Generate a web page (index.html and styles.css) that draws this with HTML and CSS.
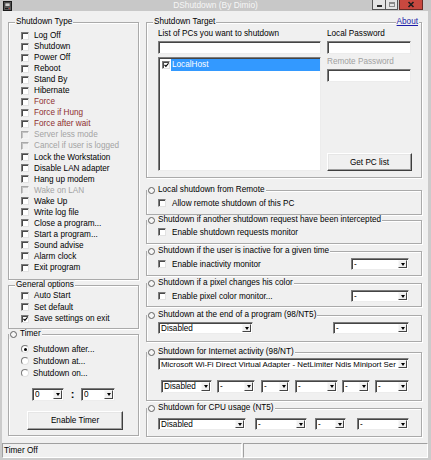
FILE: index.html
```html
<!DOCTYPE html>
<html>
<head>
<meta charset="utf-8">
<title>DShutdown (By Dimio)</title>
<link rel="stylesheet" href="styles.css">
</head>
<body>
<div class="window">
  <div class="titlebar">
    <svg class="app-icon" width="10" height="10" viewBox="0 0 10 10">
      <rect x="0.5" y="0.5" width="8" height="9" fill="#5a5a5a" stroke="#1b1b1b"/>
      <rect x="2" y="2" width="5" height="3.5" fill="#d0d0d0" stroke="#2a2a2a" stroke-width="0.6"/>
      <rect x="2" y="7" width="3" height="1" fill="#1b1b1b"/>
      <rect x="6" y="7" width="1" height="1" fill="#c03030"/>
    </svg>
    <span class="title">DShutdown (By Dimio)</span>
    <div class="caption">
      <span class="cap cap-min"><span class="min-bar"></span></span>
      <span class="cap cap-max"><span class="max-box"></span></span>
      <span class="cap cap-close">
        <svg width="8" height="7" viewBox="0 0 8 7"><path d="M1.5 1 L6.5 6 M6.5 1 L1.5 6" stroke="#1e1e1e" stroke-width="1.6"/></svg>
      </span>
    </div>
  </div>

  <div class="frame-body">
    <div class="client">
      <div class="col col-left">
        <section class="group g-type">
          <div class="legend"><span class="legend-text">Shutdown Type</span></div>
          <div class="type-list">
            <label class="check"><span class="cb"></span><span class="txt">Log Off</span></label>
            <label class="check"><span class="cb"></span><span class="txt">Shutdown</span></label>
            <label class="check"><span class="cb"></span><span class="txt">Power Off</span></label>
            <label class="check"><span class="cb"></span><span class="txt">Reboot</span></label>
            <label class="check"><span class="cb"></span><span class="txt">Stand By</span></label>
            <label class="check"><span class="cb"></span><span class="txt">Hibernate</span></label>
            <label class="check red"><span class="cb"></span><span class="txt">Force</span></label>
            <label class="check red"><span class="cb"></span><span class="txt">Force if Hung</span></label>
            <label class="check red"><span class="cb"></span><span class="txt">Force after wait</span></label>
            <label class="check disabled"><span class="cb"></span><span class="txt">Server less mode</span></label>
            <label class="check disabled"><span class="cb"></span><span class="txt">Cancel if user is logged</span></label>
            <label class="check"><span class="cb"></span><span class="txt">Lock the Workstation</span></label>
            <label class="check"><span class="cb"></span><span class="txt">Disable LAN adapter</span></label>
            <label class="check"><span class="cb"></span><span class="txt">Hang up modem</span></label>
            <label class="check disabled"><span class="cb"></span><span class="txt">Wake on LAN</span></label>
            <label class="check"><span class="cb"></span><span class="txt">Wake Up</span></label>
            <label class="check"><span class="cb"></span><span class="txt">Write log file</span></label>
            <label class="check"><span class="cb"></span><span class="txt">Close a program...</span></label>
            <label class="check"><span class="cb"></span><span class="txt">Start a program...</span></label>
            <label class="check"><span class="cb"></span><span class="txt">Sound advise</span></label>
            <label class="check"><span class="cb"></span><span class="txt">Alarm clock</span></label>
            <label class="check"><span class="cb"></span><span class="txt">Exit program</span></label>
          </div>
        </section>

        <section class="group g-general">
          <div class="legend"><span class="legend-text">General options</span></div>
          <div class="general-list">
            <label class="check"><span class="cb"></span><span class="txt">Auto Start</span></label>
            <label class="check"><span class="cb"></span><span class="txt">Set default</span></label>
            <label class="check"><span class="cb checked"><svg width="6" height="6" viewBox="0 0 6 6"><path d="M0.6 2.8 L2.3 4.6 L5.4 0.9" stroke="#000" stroke-width="1.4" fill="none"/></svg></span><span class="txt">Save settings on exit</span></label>
          </div>
        </section>

        <section class="group g-timer">
          <div class="legend"><span class="legend-text dot">Timer</span></div>
          <div class="timer-body">
            <label class="check radio-row"><span class="radio on"></span><span class="txt">Shutdown after...</span></label>
            <label class="check radio-row"><span class="radio"></span><span class="txt">Shutdown at...</span></label>
            <label class="check radio-row"><span class="radio"></span><span class="txt">Shutdown on...</span></label>
            <div class="time-row">
              <div class="combo tall c-t1"><span class="combo-text">0</span><span class="combo-btn"></span></div>
              <span class="colon">:</span>
              <div class="combo tall c-t2"><span class="combo-text">0</span><span class="combo-btn"></span></div>
            </div>
            <div class="btn btn-timer">Enable Timer</div>
          </div>
        </section>
      </div>

      <div class="col col-right">
        <section class="group g-target">
          <div class="legend"><span class="legend-text">Shutdown Target</span><a class="about">About</a></div>
          <div class="target-body">
            <div class="tcol">
              <div class="lbl">List of PCs you want to shutdown</div>
              <div class="field f-list"></div>
              <div class="listbox">
                <div class="list-item">
                  <span class="cb checked"><svg width="6" height="6" viewBox="0 0 6 6"><path d="M0.6 2.8 L2.3 4.6 L5.4 0.9" stroke="#000" stroke-width="1.4" fill="none"/></svg></span>
                  <span class="sel">LocalHost</span>
                </div>
              </div>
            </div>
            <div class="tcol tcol-right">
              <div class="lbl">Local Password</div>
              <div class="field f-pass"></div>
              <div class="lbl lbl-dis">Remote Password</div>
              <div class="field f-pass f-remote"></div>
              <div class="btn btn-getlist">Get PC list</div>
            </div>
          </div>
        </section>

        <section class="group g-local">
          <div class="legend"><span class="legend-text dot">Local shutdown from Remote</span></div>
          <div class="rbody rb-local">
            <label class="check"><span class="cb"></span><span class="txt">Allow remote shutdown of this PC</span></label>
          </div>
        </section>

        <section class="group g-another">
          <div class="legend"><span class="legend-text dot">Shutdown if another shutdown request have been intercepted</span></div>
          <div class="rbody rb-another">
            <label class="check"><span class="cb"></span><span class="txt">Enable shutdown requests monitor</span></label>
          </div>
        </section>

        <section class="group g-inactive">
          <div class="legend"><span class="legend-text dot">Shutdown if the user is inactive for a given time</span></div>
          <div class="rbody rb-split">
            <label class="check"><span class="cb"></span><span class="txt">Enable inactivity monitor</span></label>
            <div class="combo c-small"><span class="combo-text">-</span><span class="combo-btn"></span></div>
          </div>
        </section>

        <section class="group g-pixel">
          <div class="legend"><span class="legend-text dot">Shutdown if a pixel changes his color</span></div>
          <div class="rbody rb-split">
            <label class="check"><span class="cb"></span><span class="txt">Enable pixel color monitor...</span></label>
            <div class="combo c-small"><span class="combo-text">-</span><span class="combo-btn"></span></div>
          </div>
        </section>

        <section class="group g-end">
          <div class="legend"><span class="legend-text dot">Shutdown at the end of a program (98/NT5)</span></div>
          <div class="rbody rb-end">
            <div class="combo c-end1"><span class="combo-text">Disabled</span><span class="combo-btn"></span></div>
            <div class="combo c-end2"><span class="combo-text">-</span><span class="combo-btn"></span></div>
          </div>
        </section>

        <section class="group g-net">
          <div class="legend"><span class="legend-text dot">Shutdown for Internet activity (98/NT)</span></div>
          <div class="rbody rb-net">
            <div class="combo c-wide"><span class="combo-text">Microsoft Wi-Fi Direct Virtual Adapter - NetLimiter Ndis Miniport Ser</span><span class="combo-btn"></span></div>
            <div class="net-row">
              <div class="combo tall c-n1"><span class="combo-text">Disabled</span><span class="combo-btn"></span></div>
              <div class="combo tall c-n2"><span class="combo-text">-</span><span class="combo-btn"></span></div>
              <div class="combo tall c-n3"><span class="combo-text">-</span><span class="combo-btn"></span></div>
              <div class="combo tall c-n4"><span class="combo-text">-</span><span class="combo-btn"></span></div>
              <div class="combo tall c-n5"><span class="combo-text">-</span><span class="combo-btn"></span></div>
              <div class="combo tall c-n6"><span class="combo-text">-</span><span class="combo-btn"></span></div>
            </div>
          </div>
        </section>

        <section class="group g-cpu">
          <div class="legend"><span class="legend-text dot">Shutdown for CPU usage (NT5)</span></div>
          <div class="rbody rb-cpu">
            <div class="combo c-c1"><span class="combo-text">Disabled</span><span class="combo-btn"></span></div>
            <div class="combo c-c2"><span class="combo-text">-</span><span class="combo-btn"></span></div>
            <div class="combo c-c3"><span class="combo-text">-</span><span class="combo-btn"></span></div>
            <div class="combo c-c4"><span class="combo-text">-</span><span class="combo-btn"></span></div>
          </div>
        </section>
      </div>
    </div>

    <div class="statusbar">
      <div class="panel p1">Timer Off</div>
      <div class="panel p2"></div>
    </div>
  </div>
</div>
</body>
</html>
```

FILE: styles.css
```css
* { box-sizing: border-box; margin: 0; padding: 0; }
html, body { width: 431px; height: 460px; overflow: hidden; }
body {
  font-family: "Liberation Sans", Arial, sans-serif;
  font-size: 8.2px;
  color: #000;
  background: #cbcbcb;
}

.window {
  width: 431px;
  height: 460px;
  display: flex;
  flex-direction: column;
  background: #cbcbcb;
}

/* title bar */
.titlebar {
  height: 11px;
  flex: none;
  display: grid;
  grid-template-columns: 1fr auto 1fr;
  align-items: start;
  background: #c8c8c8;
}
.app-icon { display: block; margin: 1px 0 0 3px; }
.title {
  color: #f6f6f6;
  font-size: 8.4px;
  line-height: 11px;
  white-space: nowrap;
}
.caption {
  justify-self: end;
  display: flex;
  margin-right: 8px;
  height: 10px;
}
.cap { height: 10px; display: flex; align-items: center; justify-content: center; }
.cap-min {
  width: 14px;
  background: #e4e4e4;
  border: 1px solid #555;
  border-top: none;
  align-items: flex-end;
  padding-bottom: 2px;
}
.min-bar { width: 5px; height: 2px; background: #2a2a2a; }
.cap-max {
  width: 12px;
  background: #e4e4e4;
  border: 1px solid #555;
  border-top: none;
  border-left: none;
}
.max-box { width: 6px; height: 5px; border: 1px solid #8a8a8a; border-top-width: 2px; }
.cap-close {
  width: 24px;
  margin-left: 1px;
  background: #c9483f;
  border: 1px solid #6a2a26;
  border-top: none;
}

/* client */
.frame-body {
  flex: 1;
  display: flex;
  flex-direction: column;
  margin: 0 3px 2px 2px;
  background: #f0f0f0;
}
.client {
  flex: 1;
  display: flex;
  gap: 7px;
  padding: 11px 6px 0 6px;
}
.col { display: flex; flex-direction: column; }
.col-left { width: 131px; }
.col-right { width: 276px; }

/* group boxes */
.group {
  flex: none;
  border: 1px solid #aaaaaa;
  box-shadow: inset 1px 1px 0 #ffffff, 1px 1px 0 #ffffff;
}
.legend {
  display: flex;
  height: 10px;
  margin-top: -6px;
  line-height: 10px;
  white-space: nowrap;
}
.legend-text {
  background: #f0f0f0;
  padding: 0 1px;
  margin-left: 6px;
}
.legend-text.dot {
  display: flex;
  align-items: center;
  margin-left: 0;
  padding-left: 0;
}
.legend-text.dot::before {
  content: "";
  width: 5px;
  height: 5px;
  border-radius: 50%;
  border: 1px solid #606060;
  background: #f6f6f6;
  margin: 0 3px 0 1px;
}
.about {
  margin-left: auto;
  margin-right: 2px;
  background: #f0f0f0;
  color: #1c1ca8;
  text-decoration: underline;
  padding: 0 1px;
}

.g-type { height: 258px; }
.g-general { height: 44px; margin-top: 5px; }
.g-timer { height: 102px; margin-top: 5px; }

.g-target { height: 156px; }
.g-local { height: 25px; margin-top: 12px; }
.g-another { height: 24px; margin-top: 5px; }
.g-inactive { height: 25px; margin-top: 7px; }
.g-pixel { height: 24px; margin-top: 7px; }
.g-end { height: 27px; margin-top: 8px; }
.g-net { height: 49px; margin-top: 10px; }
.g-cpu { height: 29px; margin-top: 7px; }

/* checkboxes */
.check {
  display: flex;
  align-items: center;
  white-space: nowrap;
}
.cb {
  width: 8px;
  height: 8px;
  flex: none;
  display: flex;
  align-items: center;
  justify-content: center;
  background: #fff;
  border: 1px solid;
  border-color: #7c7c7c #e2e2e2 #e2e2e2 #7c7c7c;
  box-shadow: inset 1px 1px 0 #4a4a4a;
}
.cb svg { display: block; margin: 1px 0 0 1px; }
.check .txt { margin-left: 5px; }
.check.red { color: #8e2f2f; }
.check.disabled { color: #a3a3a3; }
.check.disabled .cb {
  background: #f0f0f0;
  border-color: #a8a8a8 #f4f4f4 #f4f4f4 #a8a8a8;
  box-shadow: inset 1px 1px 0 #c4c4c4;
}

.type-list { margin-top: 3px; padding-left: 12px; }
.type-list .check { height: 11.05px; }

.general-list { padding-left: 12px; }
.general-list .check { height: 11.6px; }

/* timer */
.timer-body { margin-top: 4px; padding-left: 12px; }
.radio-row { height: 12px; }
.radio {
  width: 8px;
  height: 8px;
  flex: none;
  border-radius: 50%;
  background: #fff;
  border: 1px solid;
  border-color: #7a7a7a #e0e0e0 #e0e0e0 #7a7a7a;
  display: flex;
  align-items: center;
  justify-content: center;
}
.radio.on::after {
  content: "";
  width: 3px;
  height: 3px;
  border-radius: 50%;
  background: #000;
}
.radio-row .txt { margin-left: 4px; }
.time-row {
  display: flex;
  align-items: center;
  margin: 9px 0 0 11px;
}
.colon {
  width: 17px;
  text-align: center;
  font-size: 11px;
  font-weight: bold;
  line-height: 13px;
}
.c-t1 { width: 32px; }
.c-t2 { width: 34px; }
.btn-timer {
  width: 96px;
  height: 19px;
  margin: 10px 0 0 6px;
}

/* combos */
.combo {
  display: flex;
  height: 12px;
  flex: none;
  background: #fff;
  border: 1px solid;
  border-color: #7c7c7c #ececec #ececec #7c7c7c;
  box-shadow: inset 1px 1px 0 #454545;
  padding: 1px 1px 1px 2px;
}
.combo.tall { height: 13px; }
.combo-text {
  flex: 1;
  min-width: 0;
  overflow: hidden;
  white-space: nowrap;
  line-height: 9px;
}
.combo.tall .combo-text { line-height: 10px; }
.c-wide .combo-text { font-size: 7.9px; }
.combo-btn {
  width: 9px;
  flex: none;
  background: #f0f0f0;
  border: 1px solid;
  border-color: #f8f8f8 #444 #444 #f8f8f8;
  display: flex;
  align-items: center;
  justify-content: center;
}
.combo-btn::after {
  content: "";
  width: 0;
  height: 0;
  border-left: 2.5px solid transparent;
  border-right: 2.5px solid transparent;
  border-top: 3px solid #000;
}

/* fields & buttons */
.field {
  height: 13px;
  background: #fff;
  border: 1px solid;
  border-color: #7c7c7c #ececec #ececec #7c7c7c;
  box-shadow: inset 1px 1px 0 #454545;
}
.btn {
  display: flex;
  align-items: center;
  justify-content: center;
  background: #f0f0f0;
  border: 1px solid;
  border-color: #fff #3e3e3e #3e3e3e #fff;
  box-shadow: inset -1px -1px 0 #a0a0a0, inset 1px 1px 0 #e6e6e6;
}

/* target */
.target-body {
  display: grid;
  grid-template-columns: 163px 84px;
  column-gap: 6px;
  margin-top: 2px;
  padding-left: 11px;
}
.tcol { display: flex; flex-direction: column; }
.lbl { line-height: 10px; height: 10px; white-space: nowrap; }
.lbl-dis { color: #a0a0a0; margin-top: 3px; }
.f-list { margin-top: 2px; }
.f-pass { margin-top: 2px; }
.listbox {
  margin-top: 3px;
  height: 114px;
  background: #fff;
  border: 1px solid;
  border-color: #7c7c7c #ececec #ececec #7c7c7c;
  box-shadow: inset 1px 1px 0 #454545;
  padding: 1px 0 0 2px;
}
.list-item {
  display: flex;
  align-items: center;
  height: 11.5px;
}
.list-item .cb { margin-left: 1px; }
.sel {
  flex: 1;
  align-self: stretch;
  margin-left: 1px;
  background: #3399ff;
  color: #fff;
  line-height: 11.5px;
  padding-left: 1px;
}
.btn-getlist {
  margin-top: auto;
  height: 18px;
  width: 85px;
}

/* right groups */
.rbody { padding-left: 11px; padding-right: 12px; }
.rbody .check { height: 12px; }
.rbody .check .txt { margin-left: 6px; }
.rb-local { margin-top: 2px; }
.rb-another { margin-top: 1px; }
.rb-split {
  display: flex;
  justify-content: space-between;
  align-items: center;
  margin-top: 2px;
}
.c-small { width: 58px; }
.rb-end {
  display: flex;
  justify-content: space-between;
  margin-top: 2px;
}
.c-end1 { width: 95px; }
.c-end2 { width: 76px; }
.rb-net { margin-top: 1px; }
.c-wide { width: 251px; }
.net-row {
  display: flex;
  margin: 10px 0 0 3px;
}
.c-n1 { width: 51px; }
.c-n2 { width: 38px; margin-left: 5px; }
.c-n3 { width: 29px; margin-left: 6px; }
.c-n4 { width: 43px; margin-left: 5px; }
.c-n5 { width: 28px; margin-left: 4px; }
.c-n6 { width: 34px; margin-left: 5px; }
.rb-cpu {
  display: flex;
  margin-top: 5px;
}
.c-c1 { width: 88px; }
.c-c2 { width: 52px; margin-left: 9px; }
.c-c3 { width: 31px; margin-left: 8px; }
.c-c4 { width: 52px; margin-left: 11px; }

/* status bar */
.statusbar {
  height: 15px;
  flex: none;
  display: flex;
  gap: 1px;
}
.panel {
  border: 1px solid;
  border-color: #a0a0a0 #fff #fff #a0a0a0;
  line-height: 13px;
  padding-left: 1px;
  white-space: nowrap;
}
.p1 { width: 240px; }
.p2 { flex: 1; }
```
